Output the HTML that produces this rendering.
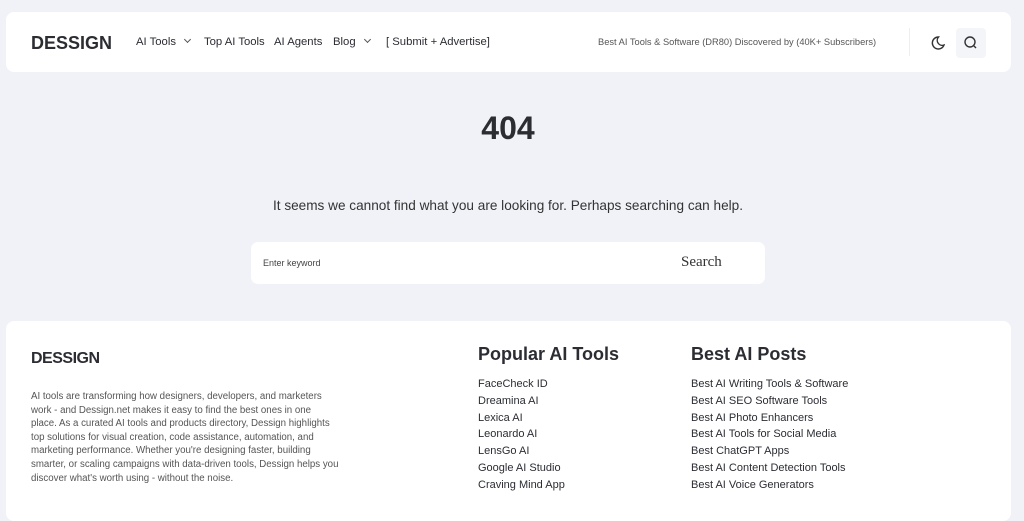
<!DOCTYPE html>
<html><head><meta charset="utf-8"><style>
*{margin:0;padding:0;box-sizing:border-box}
body{width:1024px;height:494px;overflow:hidden;background:#f0f2f7;font-family:"Liberation Sans",sans-serif;color:#2b2d33;position:relative}
.hdr{position:absolute;left:6px;top:12px;width:1005px;height:60px;background:#fff;border-radius:8px}
.logo{position:absolute;font-size:18px;font-weight:bold;color:#2b2d33}
.nav{position:absolute;font-size:11.3px;color:#2b2d33}
.chev{display:inline-block;width:5px;height:5px;border-right:1.2px solid #555;border-bottom:1.2px solid #555;transform:rotate(45deg);margin-left:9px;position:relative;top:-3px}
.tag{position:absolute;left:598px;font-size:9.3px;color:#555}
.sep{position:absolute;left:909px;top:28px;width:1px;height:28px;background:#eee}
.sbtn{position:absolute;left:956px;top:28px;width:30px;height:30px;background:#f4f5f8;border-radius:4px}
h1{position:absolute;left:0;width:1016px;text-align:center;top:110px;font-size:32px;font-weight:bold;color:#2b2d33}
.msg{position:absolute;left:0;width:1016px;text-align:center;top:198px;font-size:13.6px;color:#333}
.box{position:absolute;left:251px;top:242px;width:514px;height:42px;background:#fff;border-radius:7px}
.box .ph{position:absolute;left:12px;top:16px;font-size:9px;color:#444}
.box .bt{position:absolute;left:430px;top:12px;font-family:"Liberation Serif",serif;font-size:15px;color:#333}
.ft{position:absolute;left:6px;top:321px;width:1005px;height:200px;background:#fff;border-radius:8px}
.flogo{position:absolute;left:31px;top:350px;font-size:16px;font-weight:bold;letter-spacing:-.5px}
.fp{position:absolute;left:31px;top:390px;width:308px;font-size:9.7px;line-height:13.6px;color:#555}
.col{position:absolute;top:344px}
.col h3{font-size:18px;font-weight:bold;margin-bottom:11px;color:#2b2d33}
.col div{font-size:11px;line-height:16.8px;color:#2b2d33}
</style></head><body>
<div class="hdr"></div>
<div class="logo" style="left:31px;top:33px">DESSIGN</div>
<div class="nav" style="left:136px;top:36px">AI Tools<span class="chev"></span></div>
<div class="nav" style="left:204px;top:36px">Top AI Tools</div>
<div class="nav" style="left:274px;top:36px">AI Agents</div>
<div class="nav" style="left:333px;top:36px">Blog<span class="chev"></span></div>
<div class="nav" style="left:386px;top:36px">[ Submit + Advertise]</div>
<div class="tag" style="top:37px">Best AI Tools &amp; Software (DR80) Discovered by (40K+ Subscribers)</div>
<div class="sep"></div>
<svg style="position:absolute;left:930px;top:35px" width="16" height="16" viewBox="0 0 16 16"><path d="M8.5 2A6 6 0 1 0 14 10 5 5 0 0 1 8.5 2Z" fill="none" stroke="#333" stroke-width="1.4"/></svg>
<div class="sbtn"></div>
<svg style="position:absolute;left:963px;top:35px" width="16" height="16" viewBox="0 0 16 16"><circle cx="7" cy="7" r="5" fill="none" stroke="#333" stroke-width="1.4"/><path d="M11 11l2 2" stroke="#333" stroke-width="1.4"/></svg>
<h1>404</h1>
<div class="msg">It seems we cannot find what you are looking for. Perhaps searching can help.</div>
<div class="box"><span class="ph">Enter keyword</span><span class="bt">Search</span></div>
<div class="ft"></div>
<div class="flogo">DESSIGN</div>
<div class="fp">AI tools are transforming how designers, developers, and marketers work - and Dessign.net makes it easy to find the best ones in one place. As a curated AI tools and products directory, Dessign highlights top solutions for visual creation, code assistance, automation, and marketing performance. Whether you're designing faster, building smarter, or scaling campaigns with data-driven tools, Dessign helps you discover what's worth using - without the noise.</div>
<div class="col" style="left:478px"><h3>Popular AI Tools</h3>
<div>FaceCheck ID</div><div>Dreamina AI</div><div>Lexica AI</div><div>Leonardo AI</div><div>LensGo AI</div><div>Google AI Studio</div><div>Craving Mind App</div></div>
<div class="col" style="left:691px"><h3>Best AI Posts</h3>
<div>Best AI Writing Tools &amp; Software</div><div>Best AI SEO Software Tools</div><div>Best AI Photo Enhancers</div><div>Best AI Tools for Social Media</div><div>Best ChatGPT Apps</div><div>Best AI Content Detection Tools</div><div>Best AI Voice Generators</div></div>
</body></html>
